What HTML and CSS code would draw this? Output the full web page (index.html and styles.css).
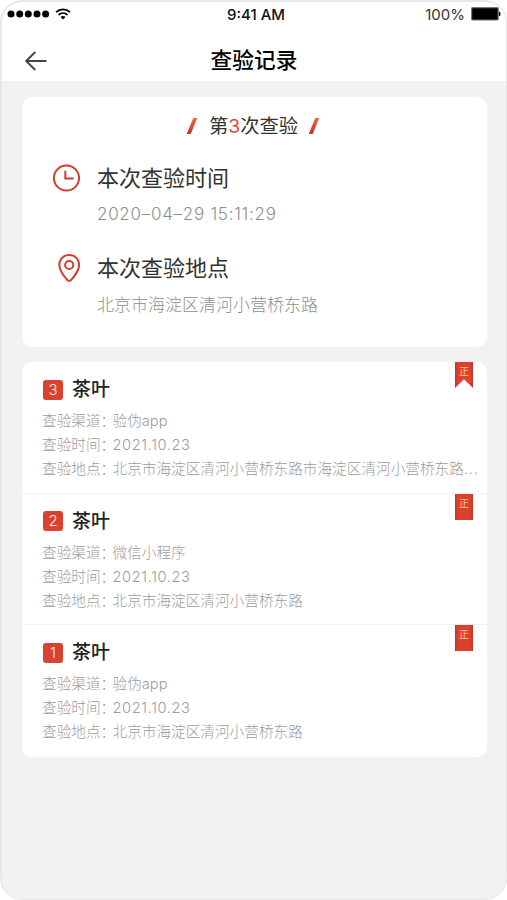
FILE: index.html
```html
<!DOCTYPE html>
<html lang="zh-CN">
<head>
    <meta charset="UTF-8">
    <meta name="viewport" content="width=device-width, initial-scale=1.0">
    <title>查验记录</title>
    <link rel="stylesheet" href="styles.css">
</head>
<body>
    <div class="phone">
        <header class="header">
            <div class="status-bar">
                <div class="status-left">
                    <svg class="signal" width="43" height="8" viewBox="0 0 43 8">
                        <circle cx="4" cy="4" r="3.5"/>
                        <circle cx="12.7" cy="4" r="3.5"/>
                        <circle cx="21.3" cy="4" r="3.5"/>
                        <circle cx="30" cy="4" r="3.5"/>
                        <circle cx="38.6" cy="4" r="3.5"/>
                    </svg>
                    <svg class="wifi" width="16" height="12" viewBox="0 0 16 12">
                        <path d="M1 4.2C5 .3 11 .3 15 4.2M3.5 6.9c2.6-2.5 6.4-2.5 9 0" fill="none" stroke="#000" stroke-width="1.8"/>
                        <path d="M8 11.4L5.5 8.9c1.4-1.3 3.6-1.3 5 0z"/>
                    </svg>
                </div>
                <span class="time">9:41 AM</span>
                <div class="status-right">
                    <span class="percent">100%</span>
                    <svg class="battery" width="30" height="14" viewBox="0 0 30 14">
                        <rect x=".6" y=".6" width="26.6" height="12.4" rx="1" fill="#000" stroke="#777" stroke-width="1.2"/>
                        <path d="M28 4.5c2 .6 2 4.2 0 4.8z"/>
                    </svg>
                </div>
            </div>
            <div class="nav-bar">
                <a class="back" href="#">
                    <svg width="22" height="20" viewBox="0 0 22 20">
                        <path d="M10.3 1L1.2 10l9.1 9M1.2 10h20.3" fill="none" stroke="#444" stroke-width="1.9"/>
                    </svg>
                </a>
                <h1>查验记录</h1>
            </div>
        </header>

        <section class="summary">
            <div class="summary-title">
                <span class="slash"></span>
                <h2>第<em>3</em>次查验</h2>
                <span class="slash"></span>
            </div>
            <div class="info">
                <svg class="info-icon" width="28" height="28" viewBox="0 0 28 28">
                    <circle cx="14.5" cy="14" r="12.6"/>
                    <path d="M13.3 6.8v7.8h8.4"/>
                </svg>
                <div>
                    <h3>本次查验时间</h3>
                    <p class="date">2020–04–29 15:11:29</p>
                </div>
            </div>
            <div class="info place">
                <svg class="info-icon" width="28" height="28" viewBox="0 0 28 28">
                    <path d="M17.2 1.1C11.5 1.1 7.3 5.3 7.3 10.6c0 5.4 4.2 11.4 8.1 15.5q1.8 1.7 3.6 0c3.9-4.1 8.1-10.1 8.1-15.5 0-5.3-4.2-9.5-9.9-9.5z"/>
                    <circle cx="17.2" cy="11" r="4.1"/>
                </svg>
                <div>
                    <h3>本次查验地点</h3>
                    <p>北京市海淀区清河小营桥东路</p>
                </div>
            </div>
        </section>

        <ul class="records">
            <li class="record">
                <span class="ribbon ribbon-cut">正</span>
                <div class="record-title"><span class="num">3</span><h3>茶叶</h3></div>
                <dl>
                    <dt>查验渠道：</dt><dd>验伪app</dd>
                    <dt>查验时间：</dt><dd class="digits">2021.10.23</dd>
                    <dt>查验地点：</dt><dd>北京市海淀区清河小营桥东路市海淀区清河小营桥东路<span class="more">...</span></dd>
                </dl>
            </li>
            <li class="record">
                <span class="ribbon">正</span>
                <div class="record-title"><span class="num">2</span><h3>茶叶</h3></div>
                <dl>
                    <dt>查验渠道：</dt><dd>微信小程序</dd>
                    <dt>查验时间：</dt><dd class="digits">2021.10.23</dd>
                    <dt>查验地点：</dt><dd>北京市海淀区清河小营桥东路</dd>
                </dl>
            </li>
            <li class="record">
                <span class="ribbon">正</span>
                <div class="record-title"><span class="num">1</span><h3>茶叶</h3></div>
                <dl>
                    <dt>查验渠道：</dt><dd>验伪app</dd>
                    <dt>查验时间：</dt><dd class="digits">2021.10.23</dd>
                    <dt>查验地点：</dt><dd>北京市海淀区清河小营桥东路</dd>
                </dl>
            </li>
        </ul>
    </div>
</body>
</html>
```
FILE: styles.css
```css
* {
    box-sizing: border-box;
    margin: 0;
    padding: 0;
}
body {
    background: #fff;
    font-family: Inter, "Noto Sans CJK SC", sans-serif;
    color: #333;
}
.phone {
    height: 900px;
    border: 2px solid #e8e8e8;
    border-right-width: 1px;
    border-bottom-width: 1px;
    border-radius: 22px;
    background: #f2f2f2;
    overflow: hidden;
}

/* header */
.header {
    height: 79px;
    background: #fff;
}
.status-bar {
    display: grid;
    grid-template-columns: 1fr auto 1fr;
    align-items: center;
    height: 24px;
    padding: 0 5px;
    color: #111;
}
.status-left,
.status-right {
    display: flex;
    align-items: center;
}
.status-left {
    gap: 5px;
}
.status-right {
    justify-content: flex-end;
    gap: 6px;
}
.time {
    padding-left: 4px;
    font-size: 15px;
    font-weight: 500;
}
.percent {
    font-size: 15px;
    color: #333;
}
.nav-bar {
    display: grid;
    grid-template-columns: 1fr auto 1fr;
    align-items: center;
    height: 55px;
    padding: 13px 23px 0;
}
.back {
    display: flex;
    padding-top: 1px;
}
.nav-bar h1 {
    font-size: 21.7px;
    font-weight: 500;
    line-height: 32px;
    color: #000;
}

/* current check */
.summary {
    height: 250px;
    margin: 16px 19px 0 20px;
    padding: 15px 30px 0;
    border-radius: 11px;
    background: #fff;
}
.summary-title {
    display: flex;
    justify-content: center;
    align-items: center;
    gap: 16px;
    height: 28px;
    padding-right: 3px;
}
.summary-title h2 {
    font-size: 19.3px;
    font-weight: 400;
    line-height: 28px;
}
.summary-title em {
    font-style: normal;
    color: #e2473a;
}
.slash {
    width: 4px;
    height: 16px;
    background: linear-gradient(#ef6a50, #c8301f);
    transform: skewX(-22deg);
}
.slash:first-child {
    margin-right: -1px;
}
.slash:last-child {
    margin-left: -2px;
}
.info {
    display: flex;
    gap: 17px;
    margin-top: 22px;
}
.info-icon {
    flex: none;
    margin-top: 2px;
    fill: none;
    stroke: #d43c2c;
    stroke-width: 2;
}
.info h3 {
    font-size: 22px;
    font-weight: 400;
    line-height: 32px;
}
.info p {
    margin-top: 8px;
    font-size: 17px;
    font-weight: 300;
    line-height: 26px;
    color: #8f8f8f;
    white-space: nowrap;
}
.info .date {
    margin-top: 7px;
    letter-spacing: 0.72px;
}
.place {
    margin-top: 25px;
}

/* history */
.records {
    margin: 15px 19px 0 20px;
    border-radius: 10px;
    background: #fff;
    list-style: none;
}
.record {
    position: relative;
    height: 131.7px;
    padding: 12px 6px 0 20px;
    border-bottom: 1px solid #f2f2f2;
}
.record:last-child {
    border-bottom: none;
}
.record-title {
    display: flex;
    align-items: center;
    gap: 9px;
    height: 31px;
    padding-left: 1px;
}
.num {
    width: 20px;
    height: 20px;
    border-radius: 3px;
    background: #da4130;
    color: #fff0e8;
    font-size: 15px;
    font-weight: 300;
    line-height: 20px;
    text-align: center;
}
.record h3 {
    padding-top: 1px;
    font-size: 19px;
    font-weight: 500;
    line-height: 28px;
    color: #222;
}
.record dl {
    display: grid;
    grid-template-columns: 70.5px 1fr;
    grid-auto-rows: 24px;
    margin-top: 4px;
    font-size: 14.65px;
    font-weight: 300;
    line-height: 24px;
    color: #9c9c9c;
}
.record dt,
.record dd {
    white-space: nowrap;
}
.record .digits {
    letter-spacing: 0.6px;
}
.more {
    letter-spacing: 0.8px;
}
.ribbon {
    position: absolute;
    top: 0;
    right: 14px;
    width: 18px;
    height: 26px;
    background: linear-gradient(90deg, #c73527 1px, #dc412e 2px, #dc412e 16px, #c73527 17px);
    color: #ffc793;
    font-size: 10px;
    line-height: 18px;
    text-align: center;
}
.ribbon-cut {
    clip-path: polygon(0 0, 100% 0, 100% 100%, 50% 66%, 0 100%);
}
```
